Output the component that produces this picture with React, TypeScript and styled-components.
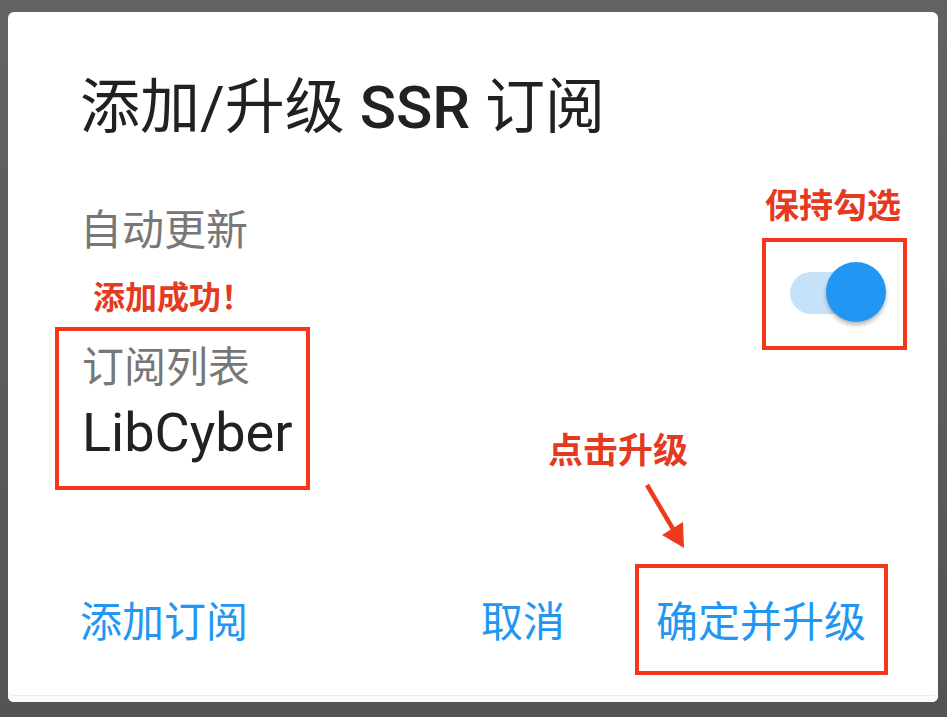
import React from "react";
import styled, { createGlobalStyle } from "styled-components";

const Global = createGlobalStyle`
  html, body { margin: 0; padding: 0; }
  body {
    width: 947px;
    height: 717px;
    overflow: hidden;
    background: linear-gradient(#636363, #545454);
    font-family: Roboto, "Noto Sans CJK SC", sans-serif;
  }
  #root { height: 717px; }
`;

const Card = styled.div`
  box-sizing: border-box;
  margin: 12px 9px 0 8px;
  height: 690px;
  background: #fff;
  border-radius: 6px;
  padding: 62px 50px 0 72px;
  display: flex;
  flex-direction: column;
  box-shadow: inset 0 -6px 0 #fbfbfb, inset 0 -7px 0 #ececec;
`;

const Title = styled.h1`
  margin: 0;
  font-family: Roboto, "Noto Sans CJK SC", sans-serif;
  font-size: 60px;
  line-height: 68px;
  font-weight: 400;
  color: #212121;
  white-space: nowrap;
  b { font-weight: 500; }
`;

const Body = styled.div`
  display: flex;
  justify-content: space-between;
  align-items: flex-start;
  margin-top: 61px;
`;

const LeftCol = styled.div`
  display: flex;
  flex-direction: column;
  align-items: flex-start;
`;

const Label = styled.div`
  font-family: "Noto Sans CJK SC", sans-serif;
  font-size: 42px;
  line-height: 48px;
  color: #777;
`;

const Note = styled.div<{ $mt?: number; $ml?: number }>`
  font-family: "Noto Sans CJK SC", sans-serif;
  font-weight: 700;
  font-size: 32px;
  line-height: 40px;
  color: #e53a1f;
  margin-top: ${(p) => p.$mt ?? 0}px;
  margin-left: ${(p) => p.$ml ?? 0}px;
  white-space: nowrap;
`;

const Outline = styled.div`
  position: relative;
  border: 4px solid #f5361a;
  box-sizing: border-box;
`;

const ListBox = styled(Outline)`
  margin-top: 12px;
  margin-left: -25px;
  width: 255px;
  padding: 9px 0 22px 23px;
`;

const Value = styled.div`
  font-family: Roboto, sans-serif;
  font-size: 54px;
  line-height: 63px;
  color: #212121;
  margin-top: 13px;
`;

const SwitchBox = styled(Outline)`
  margin-top: 35px;
  margin-right: -19px;
  padding: 20px 17px 24px 24px;
`;

const SwitchLabel = styled(Note)`
  position: absolute;
  left: -1px;
  top: -58px;
  font-size: 34px;
`;

const Switch = styled.div`
  position: relative;
  width: 96px;
  height: 60px;
`;

const Track = styled.div`
  position: absolute;
  left: 0;
  top: 10px;
  width: 90px;
  height: 42px;
  border-radius: 21px;
  background: #c6e2f9;
`;

const Thumb = styled.div`
  position: absolute;
  right: 0;
  top: 0;
  width: 60px;
  height: 60px;
  border-radius: 50%;
  background: #2196f3;
  box-shadow: 0 3px 4px rgba(0, 0, 0, 0.28);
`;

const Actions = styled.div`
  display: flex;
  align-items: flex-start;
  margin-top: 74px;
`;

const Button = styled.div<{ $pt?: number }>`
  font-family: "Noto Sans CJK SC", sans-serif;
  font-size: 42px;
  line-height: 48px;
  color: #2196f3;
  margin-top: ${(p) => p.$pt ?? 0}px;
  white-space: nowrap;
`;

const Spacer = styled.div`
  flex: 1;
`;

const ConfirmBox = styled(Outline)`
  margin-left: 70px;
  width: 253px;
  padding: 27px 0 28px 17px;
`;

const ClickLabel = styled(Note)`
  position: absolute;
  left: -91px;
  top: -140px;
  font-size: 35px;
`;

const Arrow = styled.svg`
  position: absolute;
  left: 1px;
  top: -88px;
  overflow: visible;
`;

export default function App() {
  return (
    <>
      <Global />
      <Card>
        <Title>
          添加/升级 <b>SSR</b> 订阅
        </Title>
        <Body>
          <LeftCol>
            <Label>自动更新</Label>
            <Note $mt={24} $ml={13}>添加成功！</Note>
            <ListBox>
              <Label>订阅列表</Label>
              <Value>LibCyber</Value>
            </ListBox>
          </LeftCol>
          <SwitchBox>
            <SwitchLabel>保持勾选</SwitchLabel>
            <Switch>
              <Track />
              <Thumb />
            </Switch>
          </SwitchBox>
        </Body>
        <Actions>
          <Button $pt={31}>添加订阅</Button>
          <Spacer />
          <Button $pt={31}>取消</Button>
          <ConfirmBox>
            <ClickLabel>点击升级</ClickLabel>
            <Arrow width="50" height="72" viewBox="0 0 50 72">
              <line x1="7" y1="5" x2="33" y2="49" stroke="#ee3a1c" strokeWidth="4.5" />
              <polygon points="22,55 43,42 44,68" fill="#ee3a1c" />
            </Arrow>
            <Button>确定并升级</Button>
          </ConfirmBox>
        </Actions>
      </Card>
    </>
  );
}
